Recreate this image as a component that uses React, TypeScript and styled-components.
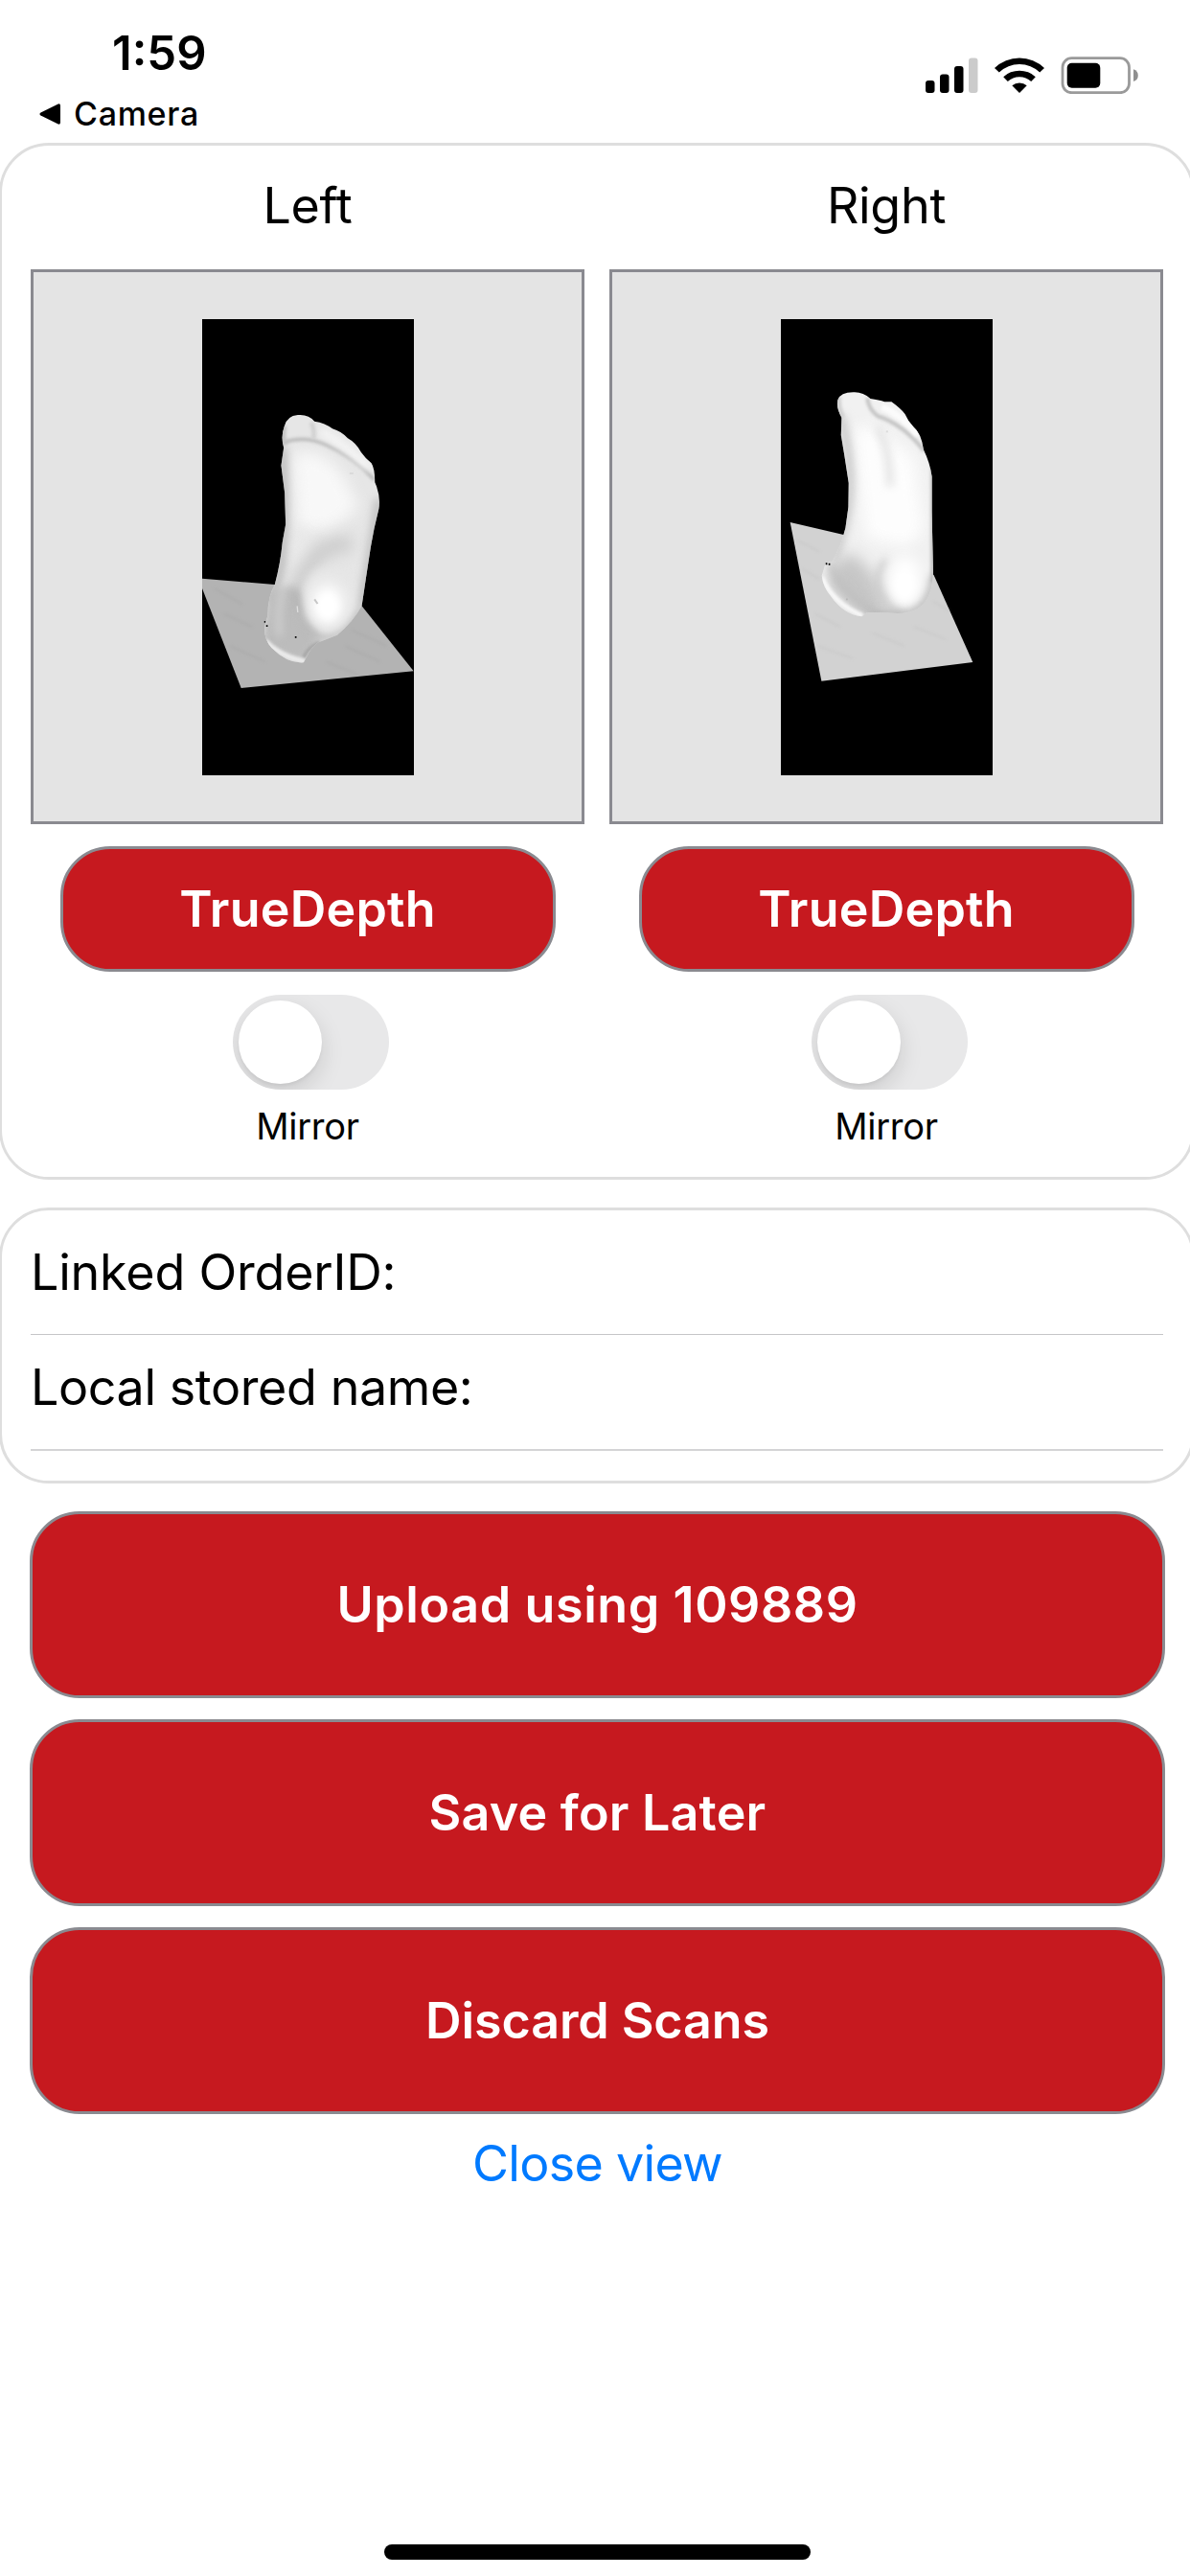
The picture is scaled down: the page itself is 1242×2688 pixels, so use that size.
import React from 'react';
import styled, { createGlobalStyle } from 'styled-components';

const colors = {
  red: '#c6191f',
  gray: '#8a8a90',
  panel: '#e4e4e4',
  lightBorder: '#dedede',
  separator: '#c6c6c8',
  blue: '#007aff',
};

const GlobalStyle = createGlobalStyle`
  body {
    margin: 0;
    background: #fff;
    color: #000;
    font-family: Inter, 'Liberation Sans', sans-serif;
  }
  * {
    box-sizing: border-box;
  }
`;

const Screen = styled.div`
  width: 1242px;
  height: 2688px;
  display: flex;
  flex-direction: column;
  overflow: hidden;
`;

const StatusBar = styled.header`
  height: 149px;
  flex: none;
  display: flex;
  justify-content: space-between;
  padding: 26px 54px 0 41px;
`;

const Time = styled.div`
  margin-left: 76px;
  font-size: 49px;
  font-weight: 600;
  line-height: 60px;
  letter-spacing: 0;
`;

const BackLink = styled.div`
  display: flex;
  align-items: center;
  gap: 13px;
  margin-top: 13px;
  font-size: 34px;
  font-weight: 500;
  line-height: 40px;
  letter-spacing: 0.7px;
`;

const StatusIcons = styled.div`
  display: flex;
  align-items: flex-start;
  padding-top: 32px;
`;

const Card = styled.section<{ $height: number }>`
  flex: none;
  height: ${({ $height }) => $height}px;
  margin: 0 -5px 29px -1px;
  padding: 0 30px;
  border: 3px solid ${colors.lightBorder};
  border-radius: 52px;
`;

const Columns = styled.div`
  display: flex;
  gap: 26px;
`;

const Column = styled.div`
  width: 578px;
  display: flex;
  flex-direction: column;
  align-items: center;
`;

const Title = styled.h2`
  margin: 0 0 3px;
  font-size: 52px;
  font-weight: 400;
  line-height: 126px;
  letter-spacing: -0.3px;
`;

const Preview = styled.div`
  width: 578px;
  height: 579px;
  display: flex;
  align-items: center;
  justify-content: center;
  background: ${colors.panel};
  border: 3px solid ${colors.gray};
`;

const Button = styled.button<{ $width: number; $height: number; $tracking: number }>`
  flex: none;
  width: ${({ $width }) => $width}px;
  height: ${({ $height }) => $height}px;
  padding: 0;
  border: 3px solid ${colors.gray};
  border-radius: 52px;
  background: ${colors.red};
  color: #fff;
  font-family: inherit;
  font-size: 52px;
  font-weight: 600;
  letter-spacing: ${({ $tracking }) => $tracking}px;
`;

const ScanButton = styled(Button)`
  margin-top: 23px;
`;

const Toggle = styled.div`
  width: 163px;
  height: 99px;
  margin: 24px 0 15px 6px;
  padding: 6px;
  border-radius: 50px;
  background: #e8e8e9;
  overflow: hidden;
`;

const Knob = styled.div`
  width: 87px;
  height: 87px;
  border-radius: 50%;
  background: #fff;
  box-shadow: 0 9px 24px rgba(0, 0, 0, 0.13), 0 3px 3px rgba(0, 0, 0, 0.04);
`;

const ToggleLabel = styled.div`
  font-size: 38px;
  line-height: 46px;
  letter-spacing: -0.3px;
`;

const FieldList = styled.div`
  padding-top: 9px;
`;

const Field = styled.div`
  height: 121px;
  padding-bottom: 10px;
  display: flex;
  align-items: center;
  border-bottom: 1px solid ${colors.separator};
  font-size: 52px;
  letter-spacing: -0.2px;

  & + & {
    letter-spacing: -0.4px;
    border-bottom: 2px solid #d4d4d6;
  }
`;

const Actions = styled.div`
  display: flex;
  flex-direction: column;
  align-items: center;
  gap: 22px;
  width: 1185px;
  margin-left: 31px;
`;

const CloseLink = styled.a`
  color: ${colors.blue};
  font-size: 52px;
  line-height: 60px;
  letter-spacing: -0.7px;
`;

const HomeIndicator = styled.div`
  width: 445px;
  height: 16px;
  margin: auto 0 17px 401px;
  flex: none;
  border-radius: 8px;
  background: #000;
`;

const BackArrow = () => (
  <svg width="23" height="22" viewBox="0 0 23 22">
    <path d="M1.5 9.6 19.8.4Q22 0 22 2.2V19.8Q22 22 19.8 21.6L1.5 12.4Q-.6 11 1.5 9.6Z" />
  </svg>
);

const StatusGlyphs = () => (
  <svg width="222" height="40" viewBox="966 58 222 40">
    <rect x="966" y="84" width="9.5" height="13" rx="3" />
    <rect x="981" y="77.5" width="9.5" height="19.5" rx="3" />
    <rect x="996" y="69" width="9.5" height="28" rx="3" />
    <rect x="1011" y="60.5" width="9.5" height="36.5" rx="3" fill="#cbcbcb" />
    <path d="M1038 71A37.500 37.500 0 0 1 1090 71L1085.200 75.500A31 31 0 0 0 1042.800 75.500Z" />
    <path d="M1047.200 80.300A24.500 24.500 0 0 1 1080.800 80.300L1076.200 85A18 18 0 0 0 1051.800 85Z" />
    <path d="M1056.300 89.300A12 12 0 0 1 1071.700 89.300L1064 97Z" />
    <rect
      x="1109"
      y="60.7"
      width="69.5"
      height="36"
      rx="9.5"
      fill="none"
      stroke="#9a9a9a"
      strokeWidth="2.8"
    />
    <rect x="1113.7" y="65.7" width="34.6" height="26" rx="5" />
    <path d="M1183 72.300Q1187.800 74 1187.800 78.700T1183 85.100Z" fill="#8f8f8f" />
  </svg>
);

const LEFT_FOOT =
  'M290 372Q298 340 332 337Q366 334 384 357Q418 362 440 380Q468 388 488 410Q514 424 530 454Q544 474 562 488Q573 504 573 548Q592 590 585 632Q570 690 560 750Q546 840 532 935Q505 985 455 1026L393 1050Q372 1068 362 1090L350 1112Q300 1116 250 1066Q226 1040 228 1000L238 965Q238 905 260 868Q278 800 284 735L294 680L291 580L280 495L288 440Q278 405 290 372Z';

const RIGHT_FOOT =
  'M222 290Q230 266 270 266Q300 264 324 286Q352 290 368 296L390 296Q420 318 432 334Q442 358 458 374Q484 396 490 446Q510 486 516 530L516 640L520 830Q518 905 484 934Q455 960 405 958Q345 953 312 956L297 968Q240 962 200 904Q176 876 172 840L184 800L204 796Q232 748 246 690L255 625L256 550L242 460L232 400L234 345Q216 315 222 290Z';

const Scan = ({ side }: { side: 'left' | 'right' }) => {
  const outline = side === 'left' ? LEFT_FOOT : RIGHT_FOOT;
  const blur = (n: number) => `url(#${side}-blur-${n})`;

  return (
    <svg
      width="221"
      height="476"
      viewBox={side === 'left' ? '33 37 662 1428' : '44 37 662 1428'}
      preserveAspectRatio="none"
    >
      <defs>
        <clipPath id={`${side}-clip`}>
          <path d={outline} />
        </clipPath>
        {[5, 12, 24].map((n) => (
          <filter
            key={n}
            id={`${side}-blur-${n}`}
            filterUnits="userSpaceOnUse"
            x="0"
            y="0"
            width="760"
            height="1500"
            colorInterpolationFilters="sRGB"
          >
            <feGaussianBlur stdDeviation={n} />
          </filter>
        ))}
      </defs>
      <rect x="0" y="0" width="760" height="1500" fill="#000" />
      {side === 'left' ? (
        <>
          <path d="M33 849 260 868 532 935 694 1139 155 1192 33 880Z" fill="#b3b3b3" />
          <path
            d="M70 880 160 930M100 960 190 1000M120 1060 230 1110M420 1110 520 1150M480 1060 590 1110M500 1010 610 1060"
            stroke="#a6a6a6"
            strokeWidth="6"
            opacity="0.5"
            filter={blur(5)}
          />
          <path d={outline} fill="#e6e6e6" />
          <g clipPath="url(#left-clip)" fill="none">
            {/* ball and arch */}
            <path d="M315 460Q400 430 470 520L520 620Q480 680 400 700L330 690Z" fill="#f8f8f8" filter={blur(24)} />
            <path d="M350 710 330 820" stroke="#ececec" strokeWidth="50" filter={blur(24)} />
            <path d="M284 440Q294 640 284 760T240 920" stroke="#b4b4b4" strokeWidth="22" filter={blur(12)} />
            <path d="M586 600Q560 780 530 935" stroke="#bcbcbc" strokeWidth="24" filter={blur(12)} />
            <path d="M500 740Q400 740 360 820Q330 860 330 960" stroke="#c8c8c8" strokeWidth="44" filter={blur(24)} />
            {/* toes */}
            <path d="M286 424Q350 400 420 430Q500 465 572 540" stroke="#bdbdbd" strokeWidth="11" filter={blur(5)} />
            <path d="M290 372Q284 400 290 430" stroke="#c4c4c4" strokeWidth="16" filter={blur(5)} />
            <path d="M374 360Q388 390 380 412" stroke="#d0d0d0" strokeWidth="14" filter={blur(5)} />
            <path d="M400 388Q460 412 556 505" stroke="#f8f8f8" strokeWidth="22" filter={blur(12)} />
            {/* ankle */}
            <path d="M240 890 325 870 345 960 400 1045 345 1115 215 1070Z" fill="#bcbcbc" filter={blur(12)} />
            <path d="M285 885Q265 960 275 1030" stroke="#d0d0d0" strokeWidth="18" filter={blur(12)} />
            <path d="M330 885Q334 975 400 1032Q460 1050 532 940" stroke="#a9a9a9" strokeWidth="14" filter={blur(12)} />
            {/* heel */}
            <path d="M350 880Q370 810 440 820Q510 830 510 900Q505 980 450 1010Q400 1020 365 970Z" fill="#e6e6e6" filter={blur(12)} />
            <ellipse cx="425" cy="925" rx="48" ry="60" fill="#fff" filter={blur(24)} />
            <ellipse cx="425" cy="940" rx="36" ry="42" fill="#fff" filter={blur(12)} />
            <path d="M350 1100Q356 1070 400 1048" stroke="#a2a2a2" strokeWidth="10" filter={blur(5)} />
            <path d="M230 1044Q280 1096 355 1108" stroke="#ececec" strokeWidth="16" filter={blur(5)} />
          </g>
          <path d="M384 914 394 928" stroke="#c6c6c6" strokeWidth="6" />
          <path d="M494 520H506" stroke="#d8d8d8" strokeWidth="5" />
          <path d="M330 935 332 955" stroke="#dedede" strokeWidth="4" />
          <path d="M227 982h4v5h-4zM233 995h5v5h-5zM323 1030h5v5h-5z" fill="#000" />
        </>
      ) : (
        <>
          <path d="M73 673 240 712 522 838 644 1111 171 1170Z" fill="#d2d2d2" />
          <path
            d="M95 730 165 765M110 820 165 850M150 960 230 1000M160 1060 270 1100M330 1020 430 1060M460 1000 560 1040M520 920 570 950"
            stroke="#c4c4c4"
            strokeWidth="6"
            opacity="0.5"
            filter={blur(5)}
          />
          <path d={outline} fill="#f1f1f1" />
          <g clipPath="url(#right-clip)" fill="none">
            {/* sole */}
            <path d="M270 380 330 370 460 470 490 700 440 750 310 720Z" fill="#fdfdfd" filter={blur(24)} />
            <path d="M232 340Q270 500 258 600T210 790" stroke="#c4c4c4" strokeWidth="22" filter={blur(12)} />
            <path d="M520 500V860" stroke="#c6c6c6" strokeWidth="18" filter={blur(5)} />
            {/* toes */}
            <path d="M314 284Q318 318 346 340Q430 368 492 450" stroke="#c4c4c4" strokeWidth="12" filter={blur(5)} />
            <path d="M226 280Q222 310 238 345" stroke="#d0d0d0" strokeWidth="14" filter={blur(5)} />
            <path d="M360 312Q420 336 474 400" stroke="#fbfbfb" strokeWidth="20" filter={blur(5)} />
            <path d="M345 375Q385 440 385 560" stroke="#e2e2e2" strokeWidth="22" filter={blur(12)} />
            {/* ankle */}
            <path d="M215 790 270 770 330 830 390 965 290 975 185 870Z" fill="#c6c6c6" filter={blur(24)} />
            <path d="M200 800Q215 880 330 952" stroke="#bcbcbc" strokeWidth="18" filter={blur(12)} />
            <path d="M375 790Q335 840 354 890T430 958" stroke="#c4c4c4" strokeWidth="16" filter={blur(12)} />
            <path d="M520 840Q510 960 410 962H320" stroke="#a0a0a0" strokeWidth="16" filter={blur(12)} />
            {/* heel */}
            <ellipse cx="432" cy="850" rx="48" ry="74" fill="#fff" filter={blur(24)} />
            <ellipse cx="430" cy="875" rx="34" ry="46" fill="#fff" filter={blur(12)} />
            <path d="M172 845Q205 925 300 966" stroke="#f8f8f8" strokeWidth="15" filter={blur(5)} />
          </g>
          <path d="M373 389h6" stroke="#dadada" strokeWidth="6" />
          <path d="M248 914h5" stroke="#b4b4b4" strokeWidth="5" />
          <path d="M184 800h5v6h-5zM193 801h5v6h-5z" fill="#000" />
        </>
      )}
    </svg>
  );
};

const FootColumn = ({ title, side }: { title: string; side: 'left' | 'right' }) => (
  <Column>
    <Title>{title}</Title>
    <Preview>
      <Scan side={side} />
    </Preview>
    <ScanButton $width={517} $height={131} $tracking={0.2}>
      TrueDepth
    </ScanButton>
    <Toggle role="switch" aria-checked={false}>
      <Knob />
    </Toggle>
    <ToggleLabel>Mirror</ToggleLabel>
  </Column>
);

const ACTIONS = [
  { label: 'Upload using 109889', tracking: 0.6 },
  { label: 'Save for Later', tracking: 0.2 },
  { label: 'Discard Scans', tracking: -0.1 },
];

const App = () => {
  return (
    <>
      <GlobalStyle />
      <Screen>
        <StatusBar>
          <div>
            <Time>1:59</Time>
            <BackLink>
              <BackArrow />
              Camera
            </BackLink>
          </div>
          <StatusIcons>
            <StatusGlyphs />
          </StatusIcons>
        </StatusBar>
        <Card $height={1082}>
          <Columns>
            <FootColumn title="Left" side="left" />
            <FootColumn title="Right" side="right" />
          </Columns>
        </Card>
        <Card $height={288}>
          <FieldList>
            <Field>Linked OrderID:</Field>
            <Field>Local stored name:</Field>
          </FieldList>
        </Card>
        <Actions>
          {ACTIONS.map(({ label, tracking }) => (
            <Button key={label} $width={1185} $height={195} $tracking={tracking}>
              {label}
            </Button>
          ))}
          <CloseLink>Close view</CloseLink>
        </Actions>
        <HomeIndicator />
      </Screen>
    </>
  );
};

export default App;
